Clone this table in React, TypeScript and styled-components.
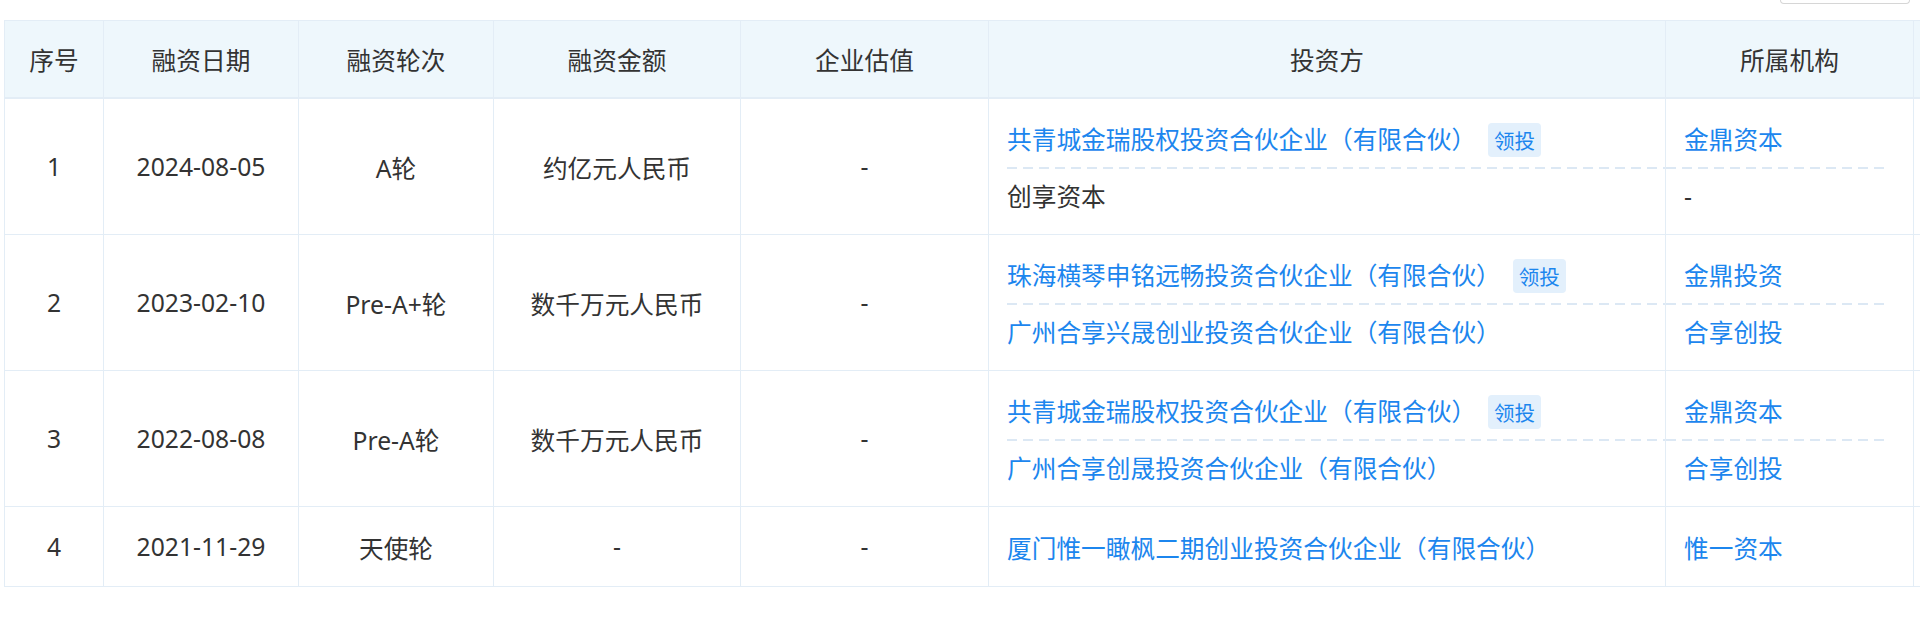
import React from "react";
import styled, { createGlobalStyle } from "styled-components";

const GlobalStyle = createGlobalStyle`
  html, body {
    margin: 0;
    padding: 0;
    background: #ffffff;
    overflow: hidden;
  }
  body {
    font-family: "Noto Sans", "Noto Sans CJK SC", sans-serif;
    color: #333333;
  }
`;

const BORDER = "#e3edf6";
const BLUE = "#1c86ee";

const Page = styled.div`
  box-sizing: border-box;
  padding: 0 0 0 4px;
  width: 1920px;
  overflow: hidden;
`;

const TopBar = styled.div`
  display: flex;
  justify-content: flex-start;
  align-items: flex-start;
  height: 20px;
  padding-left: 1776px;
`;

const SearchStub = styled.div`
  width: 128px;
  height: 3px;
  border: 1px solid #d6d6d6;
  border-top: none;
  border-radius: 0 0 4px 4px;
`;

const TableClip = styled.div`
  width: 1916px;
  overflow: hidden;
`;

const Grid = styled.div`
  display: grid;
  grid-template-columns: 99px 195px 195px 247px 248px 677px 248px 300px;
  width: max-content;
  border-top: 1px solid ${BORDER};
  border-left: 1px solid ${BORDER};
  font-size: 24.7px;
`;

const HeadCell = styled.div`
  box-sizing: border-box;
  height: 78px;
  display: flex;
  align-items: center;
  justify-content: center;
  background: #eef7fc;
  border-right: 1px solid ${BORDER};
  border-bottom: 2px solid ${BORDER};
  color: #333333;
  white-space: nowrap;
`;

const Cell = styled.div`
  box-sizing: border-box;
  display: flex;
  align-items: center;
  justify-content: center;
  border-right: 1px solid ${BORDER};
  border-bottom: 1px solid ${BORDER};
  white-space: nowrap;
`;

const StackCell = styled.div<{ $side: "left" | "right" }>`
  box-sizing: border-box;
  display: flex;
  flex-direction: column;
  padding: ${(p) => (p.$side === "left" ? "14px 0 9px 18px" : "14px 25px 9px 0")};
  border-right: 1px solid ${BORDER};
  border-bottom: 1px solid ${BORDER};
  white-space: nowrap;
`;

const SubRow = styled.div<{ $dashed: boolean; $indent: boolean }>`
  box-sizing: border-box;
  height: 56px;
  display: flex;
  align-items: center;
  padding-left: ${(p) => (p.$indent ? "18px" : "0")};
  padding-bottom: ${(p) => (p.$dashed ? "2px" : "0")};
  background: ${(p) =>
    p.$dashed
      ? `linear-gradient(to right, #dce8f4 62%, transparent 62%) left bottom / 16px 2px repeat-x`
      : "none"};
`;

const Name = styled.span<{ $link: boolean }>`
  color: ${(p) => (p.$link ? BLUE : "#333333")};
  line-height: 34px;
`;

const Tag = styled.span`
  display: inline-flex;
  align-items: center;
  justify-content: center;
  height: 34px;
  padding: 0 6px;
  margin-left: 12px;
  border-radius: 4px;
  background: #e3f0fc;
  color: ${BLUE};
  font-size: 20.5px;
`;

type Investor = {
  name: string;
  link: boolean;
  lead?: boolean;
  org: string;
  orgLink: boolean;
};

type Row = {
  no: number;
  date: string;
  round: string;
  amount: string;
  valuation: string;
  investors: Investor[];
};

const rows: Row[] = [
  {
    no: 1,
    date: "2024-08-05",
    round: "A轮",
    amount: "约亿元人民币",
    valuation: "-",
    investors: [
      { name: "共青城金瑞股权投资合伙企业（有限合伙）", link: true, lead: true, org: "金鼎资本", orgLink: true },
      { name: "创享资本", link: false, org: "-", orgLink: false },
    ],
  },
  {
    no: 2,
    date: "2023-02-10",
    round: "Pre-A+轮",
    amount: "数千万元人民币",
    valuation: "-",
    investors: [
      { name: "珠海横琴申铭远畅投资合伙企业（有限合伙）", link: true, lead: true, org: "金鼎投资", orgLink: true },
      { name: "广州合享兴晟创业投资合伙企业（有限合伙）", link: true, org: "合享创投", orgLink: true },
    ],
  },
  {
    no: 3,
    date: "2022-08-08",
    round: "Pre-A轮",
    amount: "数千万元人民币",
    valuation: "-",
    investors: [
      { name: "共青城金瑞股权投资合伙企业（有限合伙）", link: true, lead: true, org: "金鼎资本", orgLink: true },
      { name: "广州合享创晟投资合伙企业（有限合伙）", link: true, org: "合享创投", orgLink: true },
    ],
  },
  {
    no: 4,
    date: "2021-11-29",
    round: "天使轮",
    amount: "-",
    valuation: "-",
    investors: [
      { name: "厦门惟一瞰枫二期创业投资合伙企业（有限合伙）", link: true, org: "惟一资本", orgLink: true },
    ],
  },
];

const headers = ["序号", "融资日期", "融资轮次", "融资金额", "企业估值", "投资方", "所属机构", ""];

export default function App() {
  return (
    <>
      <GlobalStyle />
      <Page>
        <TopBar>
          <SearchStub />
        </TopBar>
        <TableClip>
          <Grid>
            {headers.map((h, i) => (
              <HeadCell key={i}>{h}</HeadCell>
            ))}
            {rows.map((r) => (
              <React.Fragment key={r.no}>
                <Cell>{r.no}</Cell>
                <Cell>{r.date}</Cell>
                <Cell>{r.round}</Cell>
                <Cell>{r.amount}</Cell>
                <Cell>{r.valuation}</Cell>
                <StackCell $side="left">
                  {r.investors.map((inv, i) => (
                    <SubRow key={i} $dashed={i < r.investors.length - 1} $indent={false}>
                      <Name $link={inv.link}>{inv.name}</Name>
                      {inv.lead && <Tag>领投</Tag>}
                    </SubRow>
                  ))}
                </StackCell>
                <StackCell $side="right">
                  {r.investors.map((inv, i) => (
                    <SubRow key={i} $dashed={i < r.investors.length - 1} $indent={true}>
                      <Name $link={inv.orgLink}>{inv.org}</Name>
                    </SubRow>
                  ))}
                </StackCell>
                <Cell />
              </React.Fragment>
            ))}
          </Grid>
        </TableClip>
      </Page>
    </>
  );
}
